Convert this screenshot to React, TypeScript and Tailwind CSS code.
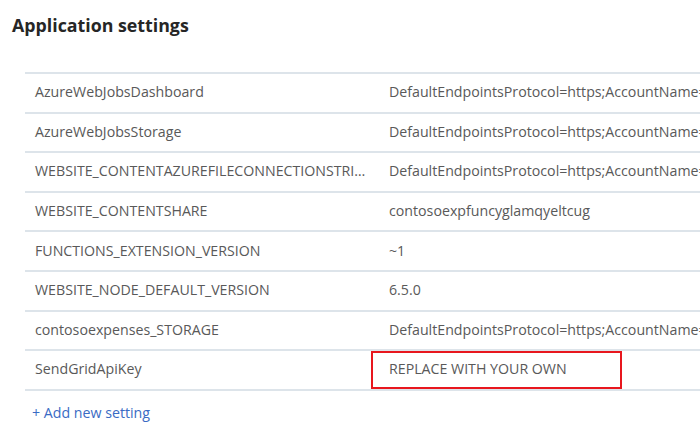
import React from "react";

const settings = [
  { name: "AzureWebJobsDashboard", value: "DefaultEndpointsProtocol=https;AccountName=contosoexpfuncyglamqyeltcug;AccountKey" },
  { name: "AzureWebJobsStorage", value: "DefaultEndpointsProtocol=https;AccountName=contosoexpfuncyglamqyeltcug;AccountKey" },
  { name: "WEBSITE_CONTENTAZUREFILECONNECTIONSTRING", value: "DefaultEndpointsProtocol=https;AccountName=contosoexpfuncyglamqyeltcug;AccountKey" },
  { name: "WEBSITE_CONTENTSHARE", value: "contosoexpfuncyglamqyeltcug" },
  { name: "FUNCTIONS_EXTENSION_VERSION", value: "~1" },
  { name: "WEBSITE_NODE_DEFAULT_VERSION", value: "6.5.0" },
  { name: "contosoexpenses_STORAGE", value: "DefaultEndpointsProtocol=https;AccountName=contosoexpensesstorage;AccountKey" },
];

export default function App() {
  return (
    <div className="w-[700px] h-[441px] overflow-hidden bg-white font-['Open_Sans',sans-serif] text-[#595959]">
      {/* Heading */}
      <h1 className="pl-3 pt-[12px] text-[17.8px] font-bold text-[#262626] leading-[26px]">
        Application settings
      </h1>

      {/* Settings table */}
      <div className="ml-[25px] mt-[34px] w-[900px]">
        {settings.map((s) => (
          <div
            key={s.name}
            className="flex h-[39.6px] items-center border-t-2 border-[#dde4ea] pb-[2px] text-[14.2px]"
          >
            <div className="w-[354px] shrink-0 truncate pl-[10px] pr-[8px]">{s.name}</div>
            <div className="whitespace-nowrap pl-[10px]">{s.value}</div>
          </div>
        ))}
        <div className="flex h-[41.6px] items-center border-t-2 border-b-2 border-[#dde4ea] text-[14.2px]">
          <div className="w-[346px] shrink-0 truncate pb-[2px] pl-[10px]">SendGridApiKey</div>
          <div className="flex h-full w-[251px] items-center border-2 border-[#e8171e] pb-[2px] pl-[16px]">
            REPLACE WITH YOUR OWN
          </div>
        </div>
      </div>

      <button className="ml-[32px] mt-[11px] text-[14.2px] text-[#3a6bc4]">+ Add new setting</button>
    </div>
  );
}
